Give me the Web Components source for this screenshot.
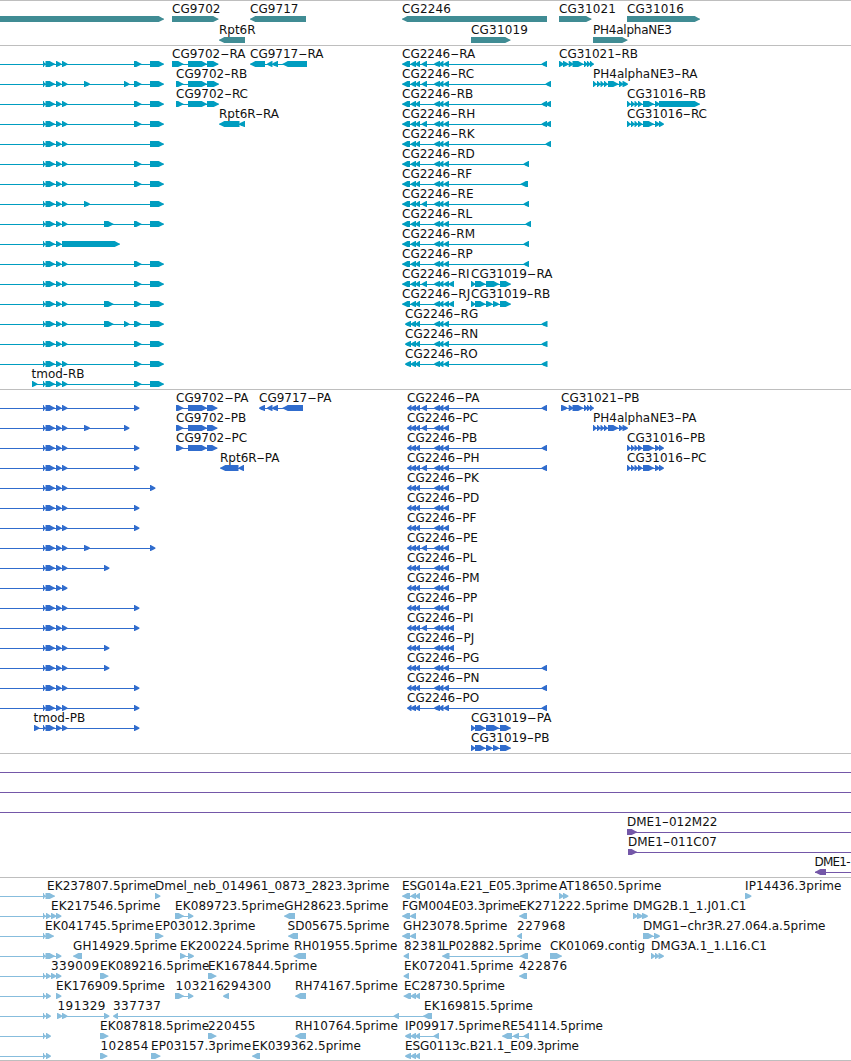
<!DOCTYPE html>
<html lang="en">
<head>
<meta charset="utf-8">
<title>Genome tracks</title>
<style>
html,body{margin:0;background:#fff;overflow:hidden}
</style>
</head>
<body>
<genome-browser></genome-browser>
<script>
// Feature: "direction|exons|label|labelStart-labelEnd|lineStart-lineEnd"; features in a row are joined by " / ".
const T = '43-46 45.5-55 56-61.5 62-67.5';
const tm = (x = '') => `>|${T} ${x}|||0`;
const E = '134-141.5 150-164';
const A = '402-410 410.5-416 415-420', A1 = '405-411 410.5-416 415-420', A2 = '407-411.5 410.5-416 415-420';
const M = '421.5-427', B = '434-440 438.5-443.5 443.5-449';
const cg = (s, x, e, ex) => `<|${ex}|CG2246-${s}|${x}-${e}`;
const H = '593-597 597-601 600.5-604.5 604-608 608-618.5 619-623.5 622.5-628';
const K = '627-631 631-635 634.5-638.5 638-642.5 643-654 655-660';
const N = '568.7-573.5 572.5-583.5 584-588 587-591 590-594';
const P = '471-475.5 475-485.5 486-499 500-511', Q = '471-475.5 475-485.5 486-492.5 493-499 500-511';

const genes = [
 `>|0-164 / >|172-218.5|CG9702|172-220 / <|250-306|CG9717|250-298 / <|402-547|CG2246|402-450.5 / >|559-591.5|CG31021|559-615.5 / >|627-700|CG31016|627-683.5`,
 `<|219-245|Rpt6R|219-255 / >|471-510.5|CG31019|471-527.5 / >|593-627.5|PH4alphaNE3|593-671.5`
];
const transcripts = [
 `${tm(E)} / >|172-183.5 188-207 207-218.5|CG9702-RA|172-245 / <|250-265 267-272.5 272-278 282.5-307|CG9717-RA|250-323 / ${cg('RA',402,474.7,`${A} ${M} ${B} 541.5-547`)} / >|559-564 563-568.5 ${N}|CG31021-RB|559-637.5`,
 `${tm('84-90 124-129.5 '+E)} / >|176-183.5 188-207 207-219|CG9702-RB|176-246.7 / ${cg('RC',402,473.7,`${A} ${M} ${B} 545.5-551`)} / >|${H}|PH4alphaNE3-RA|593-697`,
 `${tm(E)} / >|176-183.5 188-207 207-219|CG9702-RC|176-247.5 / ${cg('RB',402,472.7,`${A} ${B} 541.5-547 545.5-551`)} / >|${K} 659-700|CG31016-RB|627-705.5`,
 `${tm(E)} / <|219-239.5 239-245|Rpt6R-RA|219-279 / ${cg('RH',402,474.7,`${A} ${M} ${B} 541.5-547 545.5-551`)} / >|${K} 659-664|CG31016-RC|627-706.5`,
 `${tm('150-164')} / ${cg('RK',402,474,`${A} ${B} 545.5-551`)}`,
 `${tm(E)} / ${cg('RD',402,474.3,`${A} ${B} 523.5-529`)}`,
 `${tm(E)} / ${cg('RF',402,471.7,`${A} ${B} 520.5-528`)}`,
 `${tm('84-90 150-164')} / ${cg('RE',402,473,`${A} ${M} ${B} 523.5-529`)}`,
 `${tm('104-113.5 '+E)} / ${cg('RL',402,471.7,`${A} ${B} 525.5-531`)}`,
 `>|43-46 45.5-55 56-61.5 62-120|||0 / ${cg('RM',402,474.5,`${A} ${B} 523.5-529`)}`,
 `${tm(E)} / ${cg('RP',402,472.3,`${A} ${B} 523.5-529`)}`,
 `${tm(E)} / ${cg('RI',402,469,`${A} ${M} ${B} 448.5-454`)} / >|${P}|CG31019-RA|471-552`,
 `${tm('104-113.5 '+E)} / ${cg('RJ',402,469.7,`${A} ${B} 448.5-454`)} / >|${Q}|CG31019-RB|471-549.7`,
 `${tm('104-113.5 124-129.5 '+E)} / ${cg('RG',405,477.7,`${A1} ${B} 541.5-547.5`)}`,
 `${tm(E)} / ${cg('RN',405,477.7,`${A1} ${B} 541.5-547.5`)}`,
 `${tm(E)} / ${cg('RO',405,477.3,`${A1} ${B} 541.5-547.5`)}`,
 `>|32-37.5 ${T} ${E}|tmod-RB|31.5-84`
];
const C = '176-183.5 188-207 207-217.5';
const proteins = [
 `${tm('134-139.5')} / >|${C}|CG9702-PA|176-248 / <|259-265 267-272.5 272-278 282.5-303|CG9717-PA|259-331 / ${cg('PA',407,479,`${A2} ${M} ${B} 541.5-547`)} / >|561-567.5 ${N}|CG31021-PB|561-639`,
 `${tm('84-90 124-129.5')} / >|${C}|CG9702-PB|176-245.7 / ${cg('PC',407,477.7,`${A2} ${M} ${B}`)} / >|${H}|PH4alphaNE3-PA|593-696`,
 `${tm('134-139.5')} / >|${C}|CG9702-PC|176-246.7 / ${cg('PB',407,476.7,`${A2} ${B} 541.5-547`)} / >|${K} 659-664|CG31016-PB|627-705`,
 `${tm('134-139.5')} / <|220-238.5 238.5-244|Rpt6R-PA|220-279.5 / ${cg('PH',407,479,`${A2} ${M} ${B} 541.5-547`)} / >|${K} 659-664|CG31016-PC|627-706`,
 `${tm('150-155.5')} / ${cg('PK',407,478.3,`${A2} ${B}`)}`,
 `${tm('134-139.5')} / ${cg('PD',407,478.7,`${A2} ${B}`)}`,
 `${tm('134-139.5')} / ${cg('PF',407,475.8,`${A2} ${B}`)}`,
 `${tm('84-90 150-155.5')} / ${cg('PE',407,477.3,`${A2} ${M} ${B}`)}`,
 `${tm('104-109.5')} / ${cg('PL',407,476,`${A2} ${B}`)}`,
 `${tm()} / ${cg('PM',407,479,`${A2} ${B}`)}`,
 `${tm('134-139.5')} / ${cg('PP',407,476.7,`${A2} ${B}`)}`,
 `${tm('134-139.5')} / ${cg('PI',407,473,`${A2} ${M} ${B} 448.5-454`)}`,
 `${tm('104-109.5')} / ${cg('PJ',407,473.7,`${A2} ${B} 448.5-454`)}`,
 `${tm('104-109.5')} / ${cg('PG',407,478.7,`${A2} ${B} 541.5-547`)}`,
 `${tm('134-139.5')} / ${cg('PN',407,479,`${A2} ${B} 541.5-547`)}`,
 `${tm('134-139.5')} / ${cg('PO',407,478.7,`${A2} ${B} 541.5-547`)}`,
 `>|34-39.5 ${T} 134-139.5|tmod-PB|33.5-84.7 / >|${P}|CG31019-PA|471-551`,
 `>|${Q}|CG31019-PB|471-549`
];
const clones = [
 `>||||0-851`, `>||||0-851`, `>||||0-851`,
 `>|627-637|DME1-012M22|627-717|627-851`,
 `>|628-637|DME1-011C07|628-716.5|628-851`,
 `<|815-826|DME1-|814.5-850|815-851`
];
const L3 = '405-411 410.5-416 415-420';
const ests = [
 `>|43-46 45.5-55|EK237807.5prime|47-155.5|0 / >|155-160.5|Dmel_neb_014961_0873_2823.3prime|155-389 / <|402-410 410.5-416 415-420|ESG014a.E21_E05.3prime|402-557 / >|559-564 563-568.5|AT18650.5prime|559-661 / >|745-751.5|IP14436.3prime|745-841`,
 `>|43-46 46-51 51-56.5 56-61.5|EK217546.5prime|51-160|0 / >|175-184 188-193.5|EK089723.5prime|175-284 / <|284-295|GH28623.5prime|284.3-388 / <|402-410 410-416|FGM004E03.3prime|402-519.5 / <|519-527|EK271222.5prime|519-628 / >|633-638 637-643 642-648|DMG2B.1_1.J01.C1|633-746`,
 `>|43-46 45.5-54|EK041745.5prime|45-153.5|0 / >|155-163.5|EP03012.3prime|155-255 / <|288-298|SD05675.5prime|287.5-389 / <|402-410 410-416|GH23078.5prime|403-507 / <|517-522|227968|517-565 / >|643-653.5 654-660|DMG1-chr3R.27.064.a.5prime|643-825`,
 `>|43-46 45.5-55 56-61.5|||0 / <|73-82|GH14929.5prime|73-176.5 / >|180-186 188-194|EK200224.5prime|180-288.7 / <|293.5-306|RH01955.5prime|294-397 / <|403.5-409|82381|404-443.5 / <|442-449.5 520-528|LP02882.5prime|441.7-541 / >|550-562|CK01069.contig|550-644.5 / >|651-655.5 655-659.5 658.5-664|DMG3A.1_1.L16.C1|651-766.5`,
 `>|43-46 46-51 51-56.5 56-61.5|339009|51-98.7|0 / >|100-108.5|EK089216.5prime|100-209 / >|208-216.5|EK167844.5prime|208-316.7 / <|403.5-409|EK072041.5prime|404-513 / <|519-527|422876|519-566.7`,
 `>|43-46 46-51|||0 / >|56-61.5|EK176909.5prime|56-164.5 / >|175-184 188-193.5|103216|175.5-223.3 / <|223-229|294300|223-270.7 / <|295-306|RH74167.5prime|295-397.5 / <|403.5-411 410.5-416 415-420|EC28730.5prime|404-504.5`,
 `>|43-46 46-51|||0 / >|57-62.5 62-67.5 104-109.5|191329|57.5-105 / <|113-118 393.5-399 423-432|337737|113-160.5 / >||EK169815.5prime|424-532.5`,
 `>|43-46 46-51|||0 / >|100-108.5|EK087818.5prime|100-208.7 / >|208-216.5|220455|208-255 / <|295-306|RH10764.5prime|295-397.5 / <|${L3} 433.5-439|IP09917.5prime|405-500.7 / <|502-512 513-519 523.5-529|RE54114.5prime|502-602.5`,
 `>|43-46 46-51|||0 / >|100-107.5|102854|100.5-148 / >|151-160.5|EP03157.3prime|151-250.7 / <|252-260|EK039362.5prime|252-360.5 / <|${L3}|ESG0113c.B21.1_E09.3prime|405-578.5`
];

const LABEL_FONT = '12px "DejaVu Sans",sans-serif';
const pen = document.createElement('canvas').getContext('2d');
pen.font = LABEL_FONT;

class TrackRow extends HTMLElement {
  constructor() { super(); this.attachShadow({mode: 'open'}); }
  // The hyphen takes up the slack, so that the name and the suffix keep their natural widths.
  label(text, s, width) {
    const i = text.indexOf('-');
    if (i > 0 && i < text.length - 1) {
      const rest = width - pen.measureText(text.slice(0, i)).width - pen.measureText(text.slice(i + 1)).width;
      if (rest > 4 && rest < 11)
        return `<text x="${s}" y="12">${text.slice(0, i)}<tspan textLength="${rest.toFixed(2)}" lengthAdjust="spacingAndGlyphs">-</tspan>${text.slice(i + 1)}</text>`;
    }
    return `<text x="${s}" y="12" textLength="${width}">${text}</text>`;
  }
  set features(row) {
    let shapes = '', texts = '';
    for (const f of row.split(' / ')) {
      const [dir, exons = '', label, span, line = ''] = f.trim().split('|');
      const list = exons.trim() ? exons.trim().split(/\s+/).map(e => e.split('-').map(Number)) : [];
      const [a, b] = line.includes('-') ? line.split('-').map(Number)
        : list.length ? [line === '0' ? 0 : list[0][0] + 1, list[list.length - 1][1] - 1] : [0, 0];
      if (b > a && (list.length !== 1 || line)) shapes += `<rect x="${a}" y="18" width="${b - a}" height="1" shape-rendering="crispEdges"/>`;
      for (const [s, e] of list) {
        const w = e - s, tip = Math.min(6, w), k = w > 7 ? 2.2 : 1.6;
        shapes += dir === '>'
          ? `<path d="M${s} 15H${e - tip + .7}L${e - k} 16.8L${e} 17.8V18.6L${e - k} 19.4L${e - tip + .7} 21H${s}Z"/>`
          : `<path d="M${e} 15H${s + tip - .7}L${s + k} 16.8L${s} 17.8V18.6L${s + k} 19.4L${s + tip - .7} 21H${e}Z"/>`;
      }
      if (label) {
        const [s, e] = span.split('-').map(Number);
        texts += this.label(label, s, e - s + .5);
      }
    }
    this.shadowRoot.innerHTML = `<style>
      :host{display:block;height:var(--row,20px)}
      svg{display:block;width:851px;height:100%;overflow:visible}
      g{fill:var(--ink)}
      text{font:${LABEL_FONT};fill:#111;white-space:pre}
    </style><svg><g>${shapes}</g>${texts}</svg>`;
  }
}
customElements.define('track-row', TrackRow);

class GenomeTrack extends HTMLElement {
  constructor() {
    super();
    this.attachShadow({mode: 'open'}).innerHTML = `<style>
      :host{display:block;border-bottom:1px solid #bebebe;padding-bottom:var(--gap,3px)}
    </style><slot></slot>`;
  }
}
customElements.define('genome-track', GenomeTrack);

class GenomeBrowser extends HTMLElement {
  constructor() {
    super();
    const root = this.attachShadow({mode: 'open'});
    root.innerHTML = `<style>
      :host{display:flex;flex-direction:column;box-sizing:border-box;width:851px;height:1061px;border-top:1px solid #bebebe;background:#fff;overflow:hidden}
      .genes{--ink:#408c94;--row:21px;--gap:2px}
      .transcripts{--ink:#009dc0}
      .proteins{--ink:#306ccd}
      .clones{--ink:#7457a8}
      .ests{--ink:#87bddd;--gap:2px}
    </style>`;
    for (const [name, rows] of Object.entries({genes, transcripts, proteins, clones, ests})) {
      const track = document.createElement('genome-track');
      track.className = name;
      for (const r of rows) {
        const el = document.createElement('track-row');
        el.features = r;
        track.append(el);
      }
      root.append(track);
    }
  }
}
customElements.define('genome-browser', GenomeBrowser);
</script>
</body>
</html>
